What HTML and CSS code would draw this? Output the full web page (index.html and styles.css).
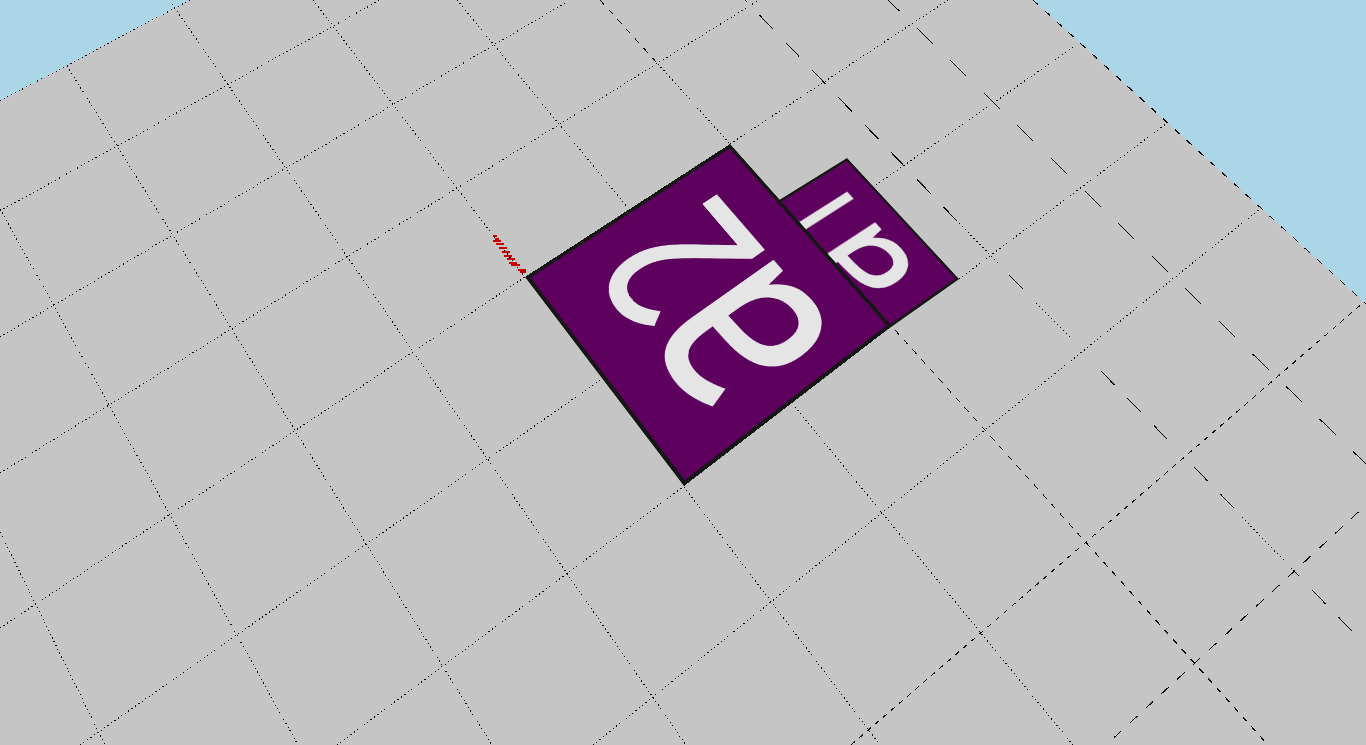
FILE: index.html
```html
<!DOCTYPE html>
<html lang="en">
<head>
<meta charset="utf-8">
<title>Board scene</title>
<link rel="stylesheet" href="styles.css">
</head>
<body>
<main class="scene">
  <svg class="ground" width="1366" height="745" viewBox="0 0 1366 745">
    <polygon class="floor" points="0,101 190,0 1033,0 1366,304 1366,745 0,745"/>
    <g class="dots">
      <line x1="0" y1="101" x2="190" y2="0"/>
      <line x1="0" y1="211" x2="380" y2="0"/>
      <line x1="0" y1="337" x2="570" y2="0"/>
      <line x1="0" y1="473" x2="759" y2="0"/>
      <line x1="0" y1="628" x2="525" y2="277"/>
      <line x1="730" y1="144" x2="948" y2="0"/>
      <line x1="80" y1="745" x2="603" y2="378"/>
      <line x1="876" y1="185" x2="1079" y2="43"/>
      <line x1="337" y1="745" x2="683" y2="487"/>
      <line x1="959" y1="279" x2="1166" y2="124"/>
      <line x1="593" y1="745" x2="1261" y2="208"/>
      <line x1="172" y1="4" x2="686" y2="745"/>
      <line x1="67" y1="66" x2="492" y2="745"/>
      <line x1="0" y1="209" x2="298" y2="745"/>
      <line x1="0" y1="532" x2="105" y2="745"/>
      <line x1="313" y1="0" x2="525" y2="277"/>
      <line x1="684" y1="487" x2="880" y2="745"/>
      <line x1="795" y1="407" x2="1073" y2="745"/>
      <line x1="457" y1="0" x2="628" y2="208"/>
      <line x1="658" y1="64" x2="730" y2="144"/>
      <line x1="956" y1="220" x2="1000" y2="265"/>
      <line x1="1036" y1="303" x2="1080" y2="347"/>
      <line x1="1242" y1="517" x2="1293" y2="570"/>
    </g>
    <line class="sky-edge" x1="1033" y1="0" x2="1366" y2="304"/>
    <g class="far-left">
      <line x1="600" y1="0" x2="658" y2="64"/>
      <line x1="895" y1="330" x2="1268" y2="745"/>
    </g>
    <line class="near-dash" x1="851" y1="745" x2="1364" y2="302"/>
    <line class="near-wide" x1="1106" y1="745" x2="1366" y2="505"/>
    <g class="wide-dash">
      <line class="first-run" x1="745" y1="0" x2="956" y2="220"/>
      <line x1="1009" y1="275" x2="1023" y2="289"/>
      <line x1="1101" y1="371" x2="1167" y2="439"/>
      <line x1="1194" y1="467" x2="1234" y2="508"/>
      <line x1="1293" y1="570" x2="1299" y2="576"/>
      <line x1="1312" y1="590" x2="1352" y2="631"/>
    </g>
    <line class="long-dash" x1="888" y1="0" x2="1366" y2="464"/>
    <path class="hatch" d="M493 236h4M495 239h4M493 241h8M496 244h8M499 248h8M502 252h8M504 256h8M507 259h8M509 263h8M511 265h9M518 270h8M520 272h6"/>
  </svg>
  <div class="tile tile-a1"><div class="label"><span class="file">a</span><span class="rank">1</span></div></div>
  <div class="tile tile-a2"><div class="label"><span class="file">a</span><span class="rank">2</span></div></div>
</main>
</body>
</html>
```
FILE: styles.css
```css
html, body {
  margin: 0;
  padding: 0;
  height: 100%;
  overflow: hidden;
  background: #aad6e8;
}
.scene {
  position: relative;
  width: 1366px;
  height: 745px;
  overflow: hidden;
}
.ground {
  position: absolute;
  left: 0;
  top: 0;
  display: block;
}
.floor {
  fill: #c5c5c5;
}
.ground line {
  stroke: #000;
  stroke-width: 1;
  fill: none;
  shape-rendering: crispEdges;
}
.dots line {
  stroke-dasharray: 1.2 3;
}
.ground .sky-edge {
  stroke-dasharray: 7 9;
}
.far-left line {
  stroke-dasharray: 6 7;
}
.ground .near-dash {
  stroke-dasharray: 5 5.6;
}
.ground .near-wide {
  stroke-dasharray: 10.2 11.3;
  stroke-dashoffset: 10.6;
}
.wide-dash line {
  stroke-dasharray: 19.5 18.5;
}
.wide-dash .first-run {
  stroke-dashoffset: 17.1;
}
.ground .long-dash {
  stroke-dasharray: 22.6 24.2;
  stroke-dashoffset: 6.9;
}
.hatch {
  stroke: #c80000;
  stroke-width: 1.2;
  fill: none;
  shape-rendering: crispEdges;
}
.tile {
  position: absolute;
  left: 0;
  top: 0;
  width: 200px;
  height: 200px;
  box-sizing: border-box;
  border: 3.5px solid #161616;
  background: #5e005e;
  transform-origin: 0 0;
}
.tile-a2 {
  transform: matrix3d(-0.57555, -0.92925, 0, 0.000418, 1.4292, -0.65775, 0, 0.000436, 0, 0, 1, 0, 684, 486, 0, 1);
}
.tile-a1 {
  transform: matrix3d(-0.3595, -0.5965, 0, 0.000275, 0.923, -0.374, 0, 0.00029, 0, 0, 1, 0, 830, 370, 0, 1);
}
.label {
  display: flex;
  align-items: baseline;
  justify-content: center;
  font-family: "Open Sans", "Liberation Sans", sans-serif;
  font-size: 165px;
  font-weight: 400;
  line-height: 1;
  color: #e5e5e5;
  -webkit-text-stroke: 2.5px #e5e5e5;
  margin-top: -35px;
  white-space: nowrap;
  filter: blur(0.3px);
}
.tile-a1 .label {
  transform: translate(15px, 6px);
}
.file {
  flex: none;
  font-size: 218px;
  transform: translateX(11px) scaleX(0.77);
}
.rank {
  flex: none;
  transform: translateX(-21px) scaleX(0.77);
}
```
